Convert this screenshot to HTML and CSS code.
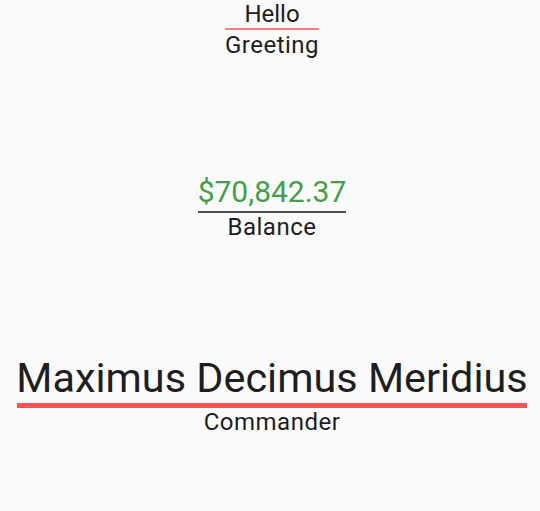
FILE: index.html
```html
<!DOCTYPE html>
<html>
<head>
<meta charset="utf-8">
<link rel="stylesheet" href="styles.css">
</head>
<body>
<div class="page">
  <div class="group">
    <div class="title">Hello</div>
    <div class="rule rule-thin"></div>
    <div class="label">Greeting</div>
  </div>
  <div class="group group-balance">
    <div class="amount">$70,842.37</div>
    <div class="rule rule-gray"></div>
    <div class="label">Balance</div>
  </div>
  <div class="group group-name">
    <div class="name">Maximus Decimus Meridius</div>
    <div class="rule rule-thick"></div>
    <div class="label">Commander</div>
  </div>
</div>
</body>
</html>
```
FILE: styles.css
```css
html, body {
  margin: 0;
  padding: 0;
  background: #fafafa;
}
body {
  font-family: Roboto, "Liberation Sans", sans-serif;
  color: #1e1e1e;
}
.page {
  display: flex;
  flex-direction: column;
  align-items: center;
  padding-left: 4px;
}
.group {
  display: flex;
  flex-direction: column;
  align-items: stretch;
  text-align: center;
}
.title {
  font-size: 24px;
  line-height: 28px;
}
.label {
  font-size: 24px;
  line-height: 28px;
  letter-spacing: 0.5px;
}
.amount {
  font-size: 30px;
  line-height: 35px;
  color: #43a047;
}
.name {
  font-size: 41.4px;
  line-height: 49px;
}
.rule-thin {
  height: 2px;
  margin: 0 0 1px;
  background: #ff7a7a;
}
.rule-gray {
  height: 2px;
  margin: 2px 0 0;
  background: #505050;
}
.rule-thick {
  height: 5px;
  margin: 0 1px;
  background: #ff5252;
}
.group-balance {
  margin-top: 115px;
}
.group-name {
  margin-top: 113px;
}
```
